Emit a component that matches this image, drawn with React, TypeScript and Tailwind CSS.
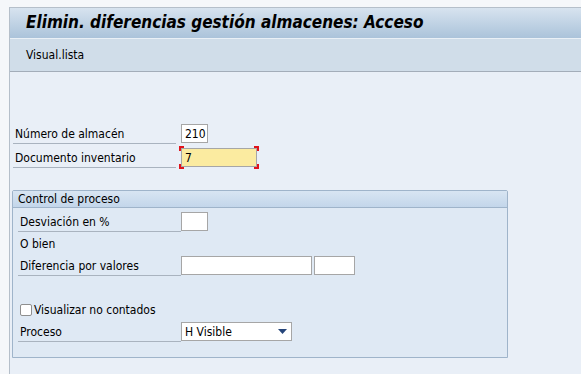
import React from "react";

const F = "'DejaVu Sans Condensed', 'Liberation Sans', sans-serif";

function Input({ w, value }: { w: number; value?: string }) {
  return (
    <div
      className="h-[19px] bg-white border border-[#a6a6a6] flex items-center px-[3px] text-[12px] text-black"
      style={{ width: w }}
    >
      {value}
    </div>
  );
}

function Row({ label, labelW, children }: { label: string; labelW: number; children?: React.ReactNode }) {
  return (
    <div className="flex items-start h-[20px]">
      <div
        className="h-[20px] flex items-center border-b border-[#a9b3bf] pl-[2px] text-[12px] text-black"
        style={{ width: labelW }}
      >
        {label}
      </div>
      <div className="flex items-start gap-[2px]">{children}</div>
    </div>
  );
}

export default function App() {
  return (
    <div className="w-full h-[374px] bg-[#f5f7fa] flex flex-col overflow-hidden text-black" style={{ fontFamily: F }}>
      <div className="h-[7px] shrink-0" />
      <div className="flex flex-1 min-h-0">
        <div className="w-[9px] shrink-0" />
        <div className="flex-1 flex flex-col border-l border-t border-[#b5bfca] min-w-0">
          <div className="h-[30px] shrink-0 bg-gradient-to-b from-[#d7e3ef] to-[#abc3da] flex items-center pl-[16px]">
            <span className="text-[17px] font-bold italic text-black">
              Elimin. diferencias gestión almacenes: Acceso
            </span>
          </div>
          <div className="h-[34px] shrink-0 bg-[#d0dde9] border-t border-[#eaf0f6] border-b border-b-[#a3adb9] flex items-center pl-[16px]">
            <span className="text-[12px]">Visual.lista</span>
          </div>
          <div className="flex-1 bg-[#e9eff7] flex flex-col pl-[3px] pr-[73px]">
            <div className="h-[52px] shrink-0" />
            <div className="flex flex-col gap-[4px]">
              <div className="flex items-start h-[20px]">
                <div className="w-[163px] h-[20px] flex items-center border-b border-[#a9b3bf] pl-[2px] text-[12px]">Número de almacén</div>
                <div className="ml-[5px]"><Input w={27} value="210" /></div>
              </div>
              <div className="flex items-start h-[20px]">
                <div className="w-[163px] h-[20px] flex items-center border-b border-[#a9b3bf] pl-[2px] text-[12px]">Documento inventario</div>
                <div className="ml-[5px] relative">
                  <div className="h-[19px] w-[76px] bg-[#fbeba0] border border-[#a6a6a6] flex items-center px-[3px] text-[12px]">7</div>
                  <div className="absolute -left-[2px] -top-[2px] w-[5px] h-[5px] border-l-2 border-t-2 border-[#e0131b]" />
                  <div className="absolute -right-[2px] -top-[2px] w-[5px] h-[5px] border-r-2 border-t-2 border-[#e0131b]" />
                  <div className="absolute -left-[2px] -bottom-[2px] w-[5px] h-[5px] border-l-2 border-b-2 border-[#e0131b]" />
                  <div className="absolute -right-[2px] -bottom-[2px] w-[5px] h-[5px] border-r-2 border-b-2 border-[#e0131b]" />
                </div>
              </div>
            </div>
            <div className="h-[22px] shrink-0" />
            <div className="h-[168px] shrink-0 -ml-[1px] border border-[#9fb4ca] rounded-t-[2px] bg-[#dfe9f4] flex flex-col">
              <div className="h-[17px] shrink-0 bg-gradient-to-b from-[#d8e5f2] to-[#c3d6ea] border-b border-[#9fb4ca] flex items-center pl-[5px] text-[12px]">
                Control de proceso
              </div>
              <div className="flex flex-col pl-[5px] pt-[4px]">
                <Row label="Desviación en %" labelW={163}><Input w={27} /></Row>
                <div className="h-[24px] flex items-center pl-[2px] text-[12px]">O bien</div>
                <Row label="Diferencia por valores" labelW={163}><Input w={131} /><Input w={41} /></Row>
                <div className="h-[27px]" />
                <div className="flex items-center gap-[2px] h-[13px] pl-[2px]">
                  <div className="w-[12px] h-[12px] bg-white border border-[#8f8f8f] rounded-[2px]" />
                  <span className="text-[12px]">Visualizar no contados</span>
                </div>
                <div className="h-[6px]" />
                <Row label="Proceso" labelW={163}>
                  <div className="h-[19px] w-[111px] bg-white border border-[#a6a6a6] flex items-center justify-between px-[3px] text-[12px]">
                    <span>H Visible</span>
                    <svg width="9" height="5" viewBox="0 0 9 5" className="mr-[1px]"><path d="M0 0 H9 L4.5 5 Z" fill="#25457a" /></svg>
                  </div>
                </Row>
              </div>
            </div>
          </div>
        </div>
      </div>
    </div>
  );
}
